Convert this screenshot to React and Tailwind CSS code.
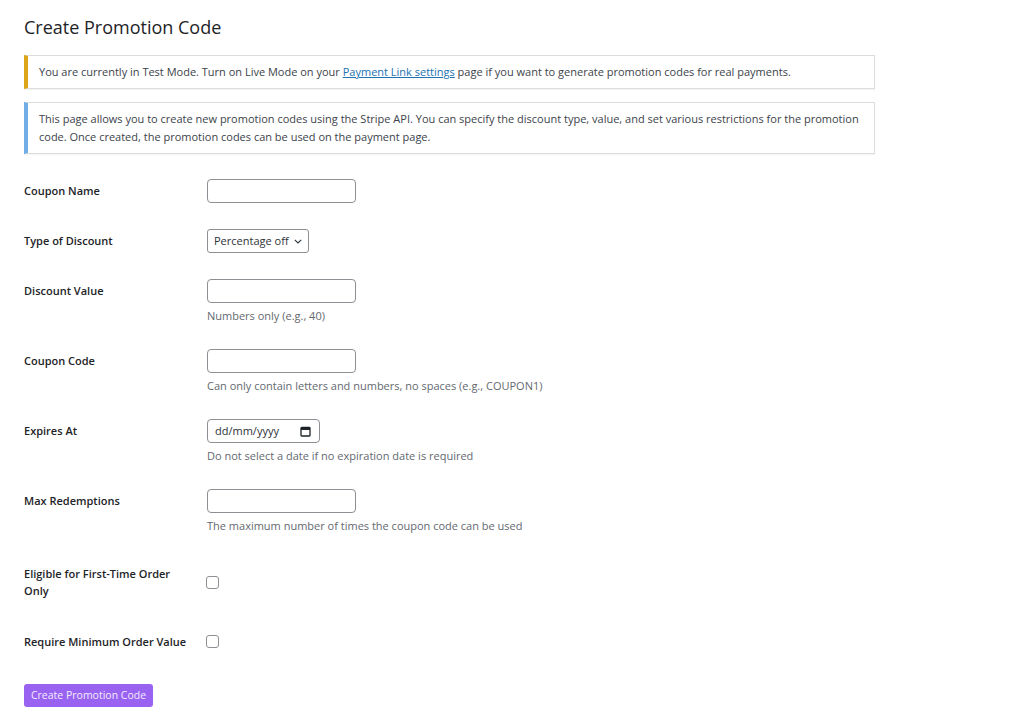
import { useState } from 'react';

function Row({ label, children, desc }) {
  return (
    <div className="flex items-start py-[13px]">
      <div className="w-[183px] shrink-0 h-[24px] flex items-center pr-[12px] text-[11px] font-semibold text-[#1d2327]">
        {label}
      </div>
      <div>
        {children}
        {desc && <p className="mt-[5px] text-[11px] leading-[15px] text-[#646970]">{desc}</p>}
      </div>
    </div>
  );
}

function CheckRow({ label, checked, onChange, className }) {
  return (
    <div className={'flex items-center ' + className}>
      <div className="w-[183px] shrink-0 pr-[14px] text-[11px] leading-[17px] font-semibold text-[#1d2327]">{label}</div>
      <input
        type="checkbox"
        checked={checked}
        onChange={onChange}
        className="block appearance-none w-[13px] h-[13px] border border-[#8c8f94] rounded-[3px] bg-white -ml-[1px]"
      />
    </div>
  );
}

export default function App() {
  const [form, setForm] = useState({ name: '', type: 'percent', value: '', code: '', max: '', first: false, min: false });

  const handleChange = (e) => {
    const { name, value, type, checked } = e.target;
    setForm({ ...form, [name]: type === 'checkbox' ? checked : value });
  };

  const inputCls = 'block w-[149px] h-[24px] px-2 border border-[#8c8f94] rounded-[4px] bg-white text-[11px] text-[#2c3338] outline-none';

  return (
    <div className="min-h-screen bg-white px-[24px] pt-[14px] font-['Open_Sans',sans-serif] text-[#3c434a]">
      <h1 className="text-[18px] leading-[26px] text-[#1d2327]">Create Promotion Code</h1>

      {/* Notices */}
      <div className="w-[851px] mt-[15px] bg-white border border-[#dcdcde] border-l-4 border-l-[#dba617] px-[11px] py-[7px] text-[11px] leading-[18px] shadow-[0_1px_1px_rgba(0,0,0,0.04)]">
        You are currently in Test Mode. Turn on Live Mode on your{' '}
        <a href="#" className="text-[#2271b1] underline">Payment Link settings</a> page if you want to generate promotion codes for real payments.
      </div>
      <div className="w-[851px] mt-[13px] bg-white border border-[#dcdcde] border-l-4 border-l-[#72aee6] px-[11px] py-[7px] text-[11px] leading-[18px] shadow-[0_1px_1px_rgba(0,0,0,0.04)]">
        This page allows you to create new promotion codes using the Stripe API. You can specify the discount type, value, and set various restrictions for the promotion code. Once created, the promotion codes can be used on the payment page.
      </div>

      {/* Form */}
      <form className="mt-[12px]" onSubmit={(e) => e.preventDefault()}>
        <Row label="Coupon Name">
          <input name="name" value={form.name} onChange={handleChange} className={inputCls} />
        </Row>
        <Row label="Type of Discount">
          <div className="relative w-[102px] h-[24px]">
            <select
              name="type"
              value={form.type}
              onChange={handleChange}
              className="block appearance-none w-full h-full pl-[6px] pr-[18px] border border-[#8c8f94] rounded-[3px] bg-white text-[11px] text-[#2c3338] outline-none"
            >
              <option value="percent">Percentage off</option>
              <option value="fixed">Fixed amount off</option>
            </select>
            <div className="absolute inset-y-0 right-[7px] flex items-center pointer-events-none">
              <svg width="8" height="5" viewBox="0 0 8 5" fill="none">
                <path d="M0.8 0.8L4 4L7.2 0.8" stroke="#2c3338" strokeWidth="1.1" />
              </svg>
            </div>
          </div>
        </Row>
        <Row label="Discount Value" desc="Numbers only (e.g., 40)">
          <input name="value" value={form.value} onChange={handleChange} className={inputCls} />
        </Row>
        <Row label="Coupon Code" desc="Can only contain letters and numbers, no spaces (e.g., COUPON1)">
          <input name="code" value={form.code} onChange={handleChange} className={inputCls} />
        </Row>
        <Row label="Expires At" desc="Do not select a date if no expiration date is required">
          <div className="w-[113px] h-[24px] flex items-center justify-between pl-[7px] pr-[8px] border border-[#8c8f94] rounded-[4px] bg-white text-[11px] text-[#2c3338]">
            <span>dd/mm/yyyy</span>
            <svg width="11" height="11" viewBox="0 0 11 11" fill="none">
              <rect x="1" y="1.5" width="9" height="8.5" rx="0.8" stroke="#1d2327" strokeWidth="1.3" />
              <rect x="1" y="1.5" width="9" height="2.5" fill="#1d2327" />
            </svg>
          </div>
        </Row>
        <Row label="Max Redemptions" desc="The maximum number of times the coupon code can be used">
          <input name="max" value={form.max} onChange={handleChange} className={inputCls} />
        </Row>

        <CheckRow
          label="Eligible for First-Time Order Only"
          checked={form.first}
          onChange={(e) => setForm({ ...form, first: e.target.checked })}
          className="pt-[19px] pb-[12px]"
        />
        <CheckRow
          label="Require Minimum Order Value"
          checked={form.min}
          onChange={(e) => setForm({ ...form, min: e.target.checked })}
          className="pt-[22px] pb-[12px]"
        />

        <button
          type="submit"
          className="block mt-[22px] w-[129px] h-[23px] rounded-[3px] bg-[#9a62f0] text-[10.5px] text-[#f3ecff]"
        >
          Create Promotion Code
        </button>
      </form>
    </div>
  );
}
